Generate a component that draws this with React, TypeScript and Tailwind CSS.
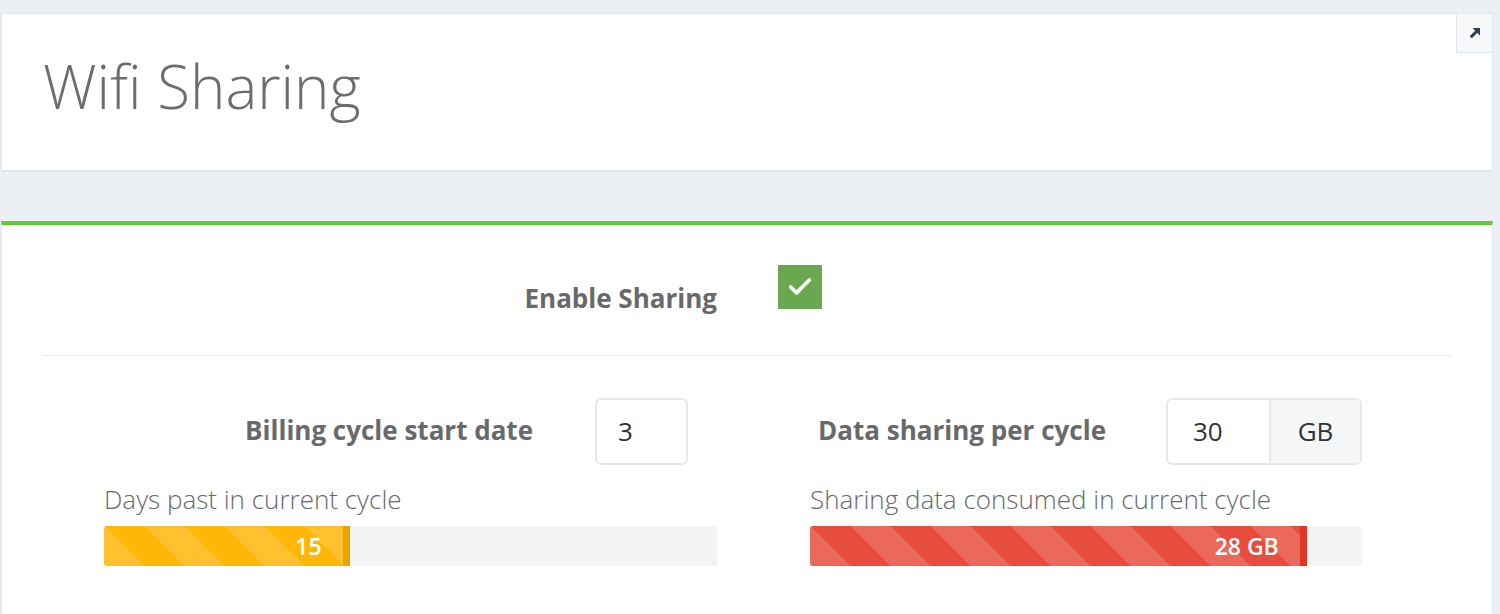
import { Check } from "lucide-react";

const ExpandIcon = () => (
  <svg width="11" height="11" viewBox="0 0 10 10" fill="#2c3e50">
    <path d="M3.2 0H10V6.8L7.6 4.4L2.6 9.4L0.6 7.4L5.6 2.4Z" />
  </svg>
);

const ProgressBar = ({
  width,
  pct,
  label,
  tone,
}: {
  width: string;
  pct: number;
  label: string;
  tone: "yellow" | "red";
}) => {
  const fill =
    tone === "yellow"
      ? "bg-[#ffb606] border-[#eba300]"
      : "bg-[#e74c3c] border-[#df3627]";

  return (
    <div className={`${width} h-[40px] rounded-[3px] bg-[#f4f4f4] overflow-hidden flex`}>
      <div
        className={`${fill} h-full border-r-[7px] flex items-center justify-end pr-[21px] bg-[repeating-linear-gradient(45deg,rgba(255,255,255,0.16)_0px,rgba(255,255,255,0.16)_28.3px,transparent_28.3px,transparent_56.6px)]`}
        style={{ width: `${pct}%` }}
      >
        <span className="text-white text-[23px] font-semibold leading-none">{label}</span>
      </div>
    </div>
  );
};

export default function App() {
  return (
    <div className="min-h-screen bg-[#eceff4] pt-[13px] font-['Open_Sans',sans-serif] overflow-hidden">
      {/* Header card */}
      <div className="relative ml-px w-[1492px] h-[159px] bg-white border border-b-2 border-[#e2e5e9] rounded-[2px]">
        <h1 className="pl-[41px] pt-[42px] text-[60px] font-light leading-none text-[#6b6d70]">
          Wifi Sharing
        </h1>
        <button className="absolute -top-px -right-px w-[37px] h-[40px] bg-[#f7f8fa] border border-[#e2e5e9] flex items-center justify-center">
          <ExpandIcon />
        </button>
      </div>

      {/* Settings card */}
      <div className="mt-[49px] ml-px w-[1492px] h-[400px] bg-white border-x border-[#e2e5e9] border-t-4 border-t-[#5ec932] px-[40px]">
        {/* Enable row */}
        <div className="flex items-start h-[84px] pt-[40px]">
          <div className="w-[675px] text-right mt-[16px] text-[26px] leading-[34px] font-bold text-[#68696c]">
            Enable Sharing
          </div>
          <div className="ml-[61px] w-[44px] h-[44px] bg-[#6aa84f] flex items-center justify-center">
            <Check className="w-[28px] h-[28px] text-white" strokeWidth={3.2} />
          </div>
        </div>

        <div className="mt-[46px] h-px bg-[#ebebeb]" />

        {/* Billing / data row */}
        <div className="flex pt-[42px]">
          <div className="w-[705px]">
            <div className="flex items-start">
              <div className="w-[491px] text-right mt-[15px] text-[26px] leading-[34px] font-bold text-[#68696c]">
                Billing cycle start date
              </div>
              <div className="ml-[62px] w-[93px] h-[67px] rounded-[6px] border-2 border-[#e8e8e8] flex items-center pl-[21px] text-[26px] text-[#333]">
                3
              </div>
            </div>
            <div className="pl-[62px] mt-[17px]">
              <div className="text-[26px] leading-[34px] font-light text-[#68696c]">
                Days past in current cycle
              </div>
              <div className="mt-[10px]">
                <ProgressBar width="w-[614px]" pct={40} label="15" tone="yellow" />
              </div>
            </div>
          </div>

          <div className="w-[705px]">
            <div className="flex items-start">
              <div className="w-[359px] text-right mt-[15px] text-[26px] leading-[34px] font-bold text-[#68696c]">
                Data sharing per cycle
              </div>
              <div className="ml-[60px] h-[67px] flex rounded-[6px] border-2 border-[#e8e8e8] overflow-hidden">
                <div className="w-[101px] flex items-center pl-[25px] text-[26px] text-[#333]">30</div>
                <div className="w-[91px] border-l-2 border-[#e8e8e8] bg-[#f5f6f8] flex items-center justify-center text-[26px] text-[#333]">
                  GB
                </div>
              </div>
            </div>
            <div className="pl-[63px] mt-[17px]">
              <div className="text-[26px] leading-[34px] font-light text-[#68696c]">
                Sharing data consumed in current cycle
              </div>
              <div className="mt-[10px]">
                <ProgressBar width="w-[552px]" pct={90} label="28 GB" tone="red" />
              </div>
            </div>
          </div>
        </div>
      </div>
    </div>
  );
}
